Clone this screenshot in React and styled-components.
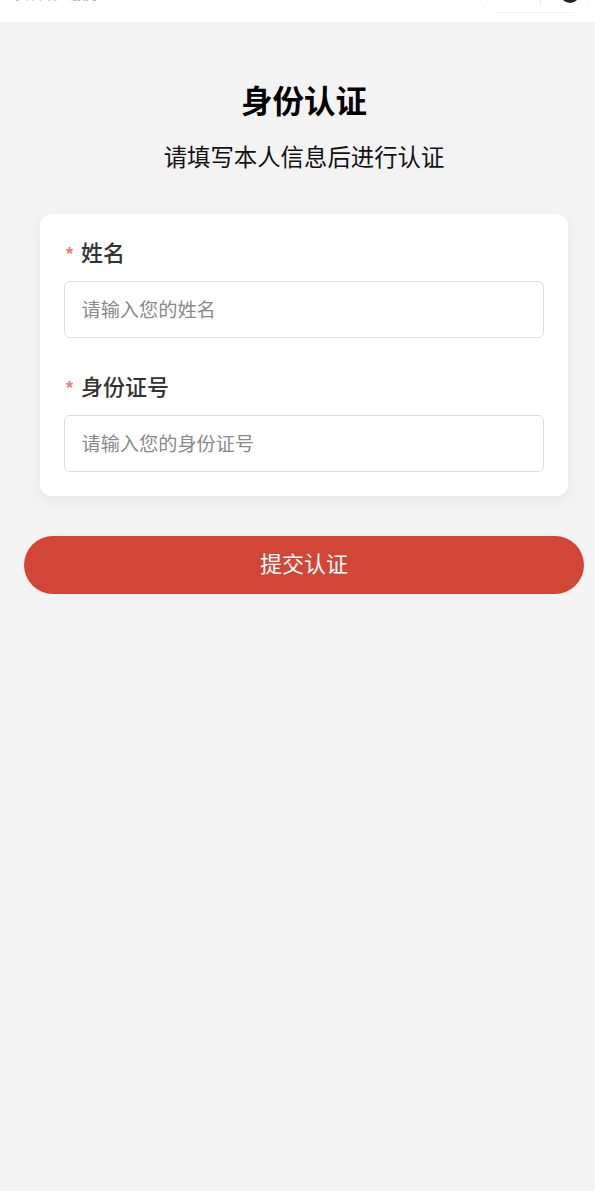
import React from "react";
import styled, { createGlobalStyle } from "styled-components";

const GlobalStyle = createGlobalStyle`
  html, body {
    margin: 0;
    padding: 0;
    background: #f3f3f3;
  }
  * {
    box-sizing: border-box;
  }
  input::placeholder {
    color: #8a8a8a;
    opacity: 1;
  }
`;

const FONT = `"Liberation Sans", "Noto Sans CJK SC", sans-serif`;

const App = () => {
  return (
    <Page>
      <GlobalStyle />
      <TopBar>
        <BarTitle>实名认证服务</BarTitle>
        <Capsule>
          <CapsuleDivider />
          <CapsuleDot />
        </Capsule>
      </TopBar>
      <Main>
        <Title>身份认证</Title>
        <Subtitle>请填写本人信息后进行认证</Subtitle>
        <Card>
          <Field>
            <Label>姓名</Label>
            <Input placeholder="请输入您的姓名" />
          </Field>
          <Field>
            <Label>身份证号</Label>
            <Input placeholder="请输入您的身份证号" />
          </Field>
        </Card>
        <SubmitButton type="button">提交认证</SubmitButton>
      </Main>
    </Page>
  );
};

const Page = styled.div`
  width: 595px;
  min-height: 1191px;
  background: #f3f3f3;
  font-family: ${FONT};
`;

const TopBar = styled.header`
  position: relative;
  height: 22px;
  background: #fff;
  overflow: hidden;
`;

const BarTitle = styled.div`
  position: absolute;
  left: 15px;
  top: -13px;
  font-size: 14px;
  line-height: 14px;
  color: #aaa;
`;

const Capsule = styled.div`
  position: absolute;
  right: 4px;
  top: -20px;
  width: 111px;
  height: 33px;
  border: 1px solid #f5f5f5;
  border-radius: 17px;
`;

const CapsuleDivider = styled.span`
  position: absolute;
  left: 59px;
  top: 8px;
  width: 1px;
  height: 16px;
  background: #e8e8e8;
`;

const CapsuleDot = styled.span`
  position: absolute;
  right: 10px;
  top: 2px;
  width: 20px;
  height: 20px;
  border-radius: 50%;
  background: #222;
`;

const Main = styled.main`
  display: flex;
  flex-direction: column;
  align-items: center;
  padding: 60px 11px 0 24px;
`;

const Title = styled.h1`
  margin: 0;
  font-size: 31.5px;
  line-height: 40px;
  font-weight: 700;
  color: #000;
`;

const Subtitle = styled.p`
  margin: 20px 0 0;
  font-size: 23.4px;
  line-height: 32px;
  color: #111;
`;

const Card = styled.section`
  width: 528px;
  margin-top: 40px;
  padding: 25px 24px 24px;
  display: flex;
  flex-direction: column;
  gap: 35px;
  background: #fff;
  border-radius: 12px;
  box-shadow: 0 4px 14px rgba(0, 0, 0, 0.06);
`;

const Field = styled.div`
  display: flex;
  flex-direction: column;
  gap: 12px;
`;

const Label = styled.label`
  display: flex;
  align-items: center;
  height: 30px;
  font-size: 22px;
  font-weight: 500;
  line-height: 30px;
  color: #333;

  &::before {
    content: "*";
    width: 15px;
    padding-left: 2px;
    font-size: 18px;
    font-weight: 700;
    color: #e0807a;
  }
`;

const Input = styled.input`
  width: 100%;
  height: 57px;
  padding: 2px 16.5px 0;
  border: 1.5px solid #dedede;
  border-radius: 6px;
  outline: none;
  background: #fff;
  font-family: ${FONT};
  font-size: 19.2px;
  color: #333;
`;

const SubmitButton = styled.button`
  width: 560px;
  height: 58px;
  margin-top: 40px;
  padding: 0 0 6px;
  border: none;
  border-radius: 29px;
  background: #d24637;
  font-family: ${FONT};
  font-size: 22px;
  color: #fff;
`;

export default App;
